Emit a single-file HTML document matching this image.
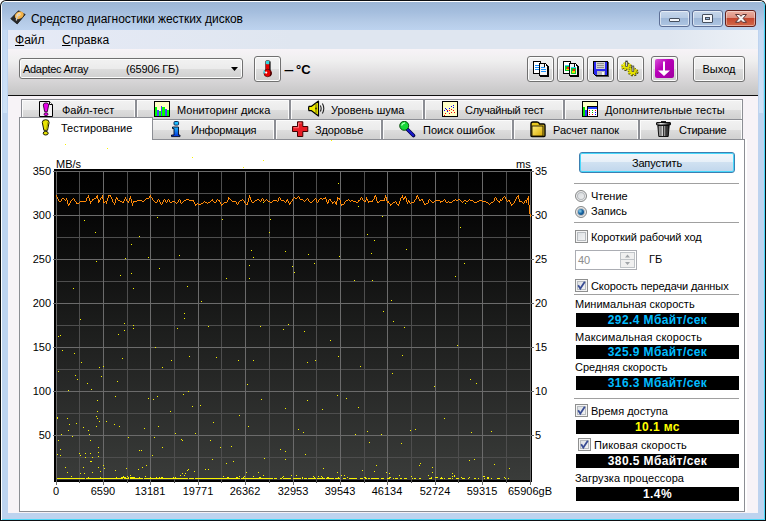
<!DOCTYPE html>
<html lang="ru"><head><meta charset="utf-8"><title>Средство диагностики жестких дисков</title>
<style>
html,body{margin:0;padding:0;background:#fff;overflow:hidden}
body{width:766px;height:521px;position:relative;font-family:"Liberation Sans",sans-serif;font-size:11px;color:#000}
.abs{position:absolute;white-space:nowrap}
.t11{font-size:11px;line-height:13px}
.cl{font-size:11px;line-height:13px;color:#000}
/* window frame */
#frame{left:0;top:0;width:766px;height:521px;background:#0c0e12;border-radius:6px 6px 0 0}
#frame2{left:1px;top:1px;width:764px;height:519px;background:#fff;border-radius:5px 5px 0 0}
#cy{left:2px;top:2px;width:763px;height:518px;background:#4ad7f7;border-radius:4px 4px 0 0}
#glass{left:2px;top:2px;width:762px;height:517px;border-radius:4px 4px 0 0;background:linear-gradient(#9cb6d6 0,#a5bede 10px,#b5cbe7 20px,#bdd3ef 28px,#bdd3ef 100%)}
#client{left:8px;top:30px;width:750px;height:483px;background:#f7f3f7}
#menubar{left:8px;top:30px;width:750px;height:19px;background:linear-gradient(90deg,#e6eaf6 0,#dfe6f0 38%,#dfe6f0 88%,#eef2f7 100%)}
#toolbar{left:8px;top:49px;width:750px;height:46px;background:linear-gradient(#f7f3f7 0,#efefef 25%,#dcdadc 60%,#c5c5c5 100%)}
#tbline{left:8px;top:95px;width:750px;height:1px;background:#101010}
.tab{box-sizing:border-box;border:1px solid #8c8e94;border-bottom:none;background:linear-gradient(#f2f2f2 0,#ebebeb 50%,#dddddd 50%,#cfcfcf 100%);box-shadow:inset 1px 1px 0 #fbfbfb,inset -1px 0 0 #fbfbfb}
.tab span{position:absolute;top:3px;font-size:11px;line-height:13px}
.tabsel{box-sizing:border-box;border:1px solid #8c8e94;border-bottom:none;background:#fff}
#page{left:19px;top:139px;width:726px;height:373px;box-sizing:border-box;border:1px solid #8c8e94;background:#fff}
.btn{box-sizing:border-box;border:1px solid #707070;border-radius:3px;background:linear-gradient(#f2f2f2 0,#ebebeb 50%,#dddddd 50%,#cfcfcf 100%);box-shadow:inset 0 0 0 1px #fcfcfc}
.sep{height:1px;background:#a0a0a0;left:574px;width:165px}
.bb{left:576px;width:163px;height:14px;background:#000;text-align:center;font-weight:bold;font-size:12px;line-height:14px;letter-spacing:0.4px}
.chk{box-sizing:border-box;width:13px;height:13px;border:1px solid #8e8f8f;background:linear-gradient(135deg,#d8dce0,#f8f8f8);box-shadow:inset 0 0 0 1px #f4f4f4, inset 0 0 0 2px #b8bcc0}
.radio{box-sizing:border-box;width:12px;height:12px;border:1px solid #868888;border-radius:50%;background:linear-gradient(135deg,#cfd3d7,#f6f6f6);box-shadow:inset 0 0 0 1px #f2f2f2,inset 0 0 0 2px #b6babe}
</style></head><body>
<div id="frame" class="abs"></div><div id="frame2" class="abs"></div><div id="cy" class="abs"></div><div id="glass" class="abs"></div>
<!-- title -->

<div class="abs" style="left:31px;top:11px;font-size:12px;line-height:16px;letter-spacing:-0.05px">Средство диагностики жестких дисков</div>
<!-- caption buttons -->
<div class="abs" style="left:659px;top:10px;width:31px;height:17px;box-sizing:border-box;border:1px solid #5d6f96;border-radius:3px;background:linear-gradient(#c6d6ea 0,#b7cbe4 45%,#9fb8d8 50%,#aec5e2 100%);box-shadow:inset 0 0 0 1px rgba(255,255,255,.55)"></div>
<div class="abs" style="left:692px;top:10px;width:31px;height:17px;box-sizing:border-box;border:1px solid #5d6f96;border-radius:3px;background:linear-gradient(#c6d6ea 0,#b7cbe4 45%,#9fb8d8 50%,#aec5e2 100%);box-shadow:inset 0 0 0 1px rgba(255,255,255,.55)"></div>
<div class="abs" style="left:725px;top:10px;width:31px;height:17px;box-sizing:border-box;border:1px solid #63201c;border-radius:3px;background:linear-gradient(#ebb0a2 0,#dd9080 45%,#c5472f 50%,#d4694a 100%);box-shadow:inset 0 0 0 1px rgba(255,255,255,.4)"></div>
<svg class="abs" style="left:659px;top:10px" width="97" height="17" viewBox="0 0 97 17"><rect x="10.500" y="8.500" width="10" height="3" rx="0.500" fill="#f4f6fa" stroke="#454f5e"/><rect x="43.500" y="4.500" width="10" height="8" rx="0.500" fill="#f4f6fa" stroke="#454f5e"/><rect x="46.500" y="7.500" width="4" height="2" fill="#98b4da" stroke="#454f5e"/><path d="M76.500 4.500L80.300 4.500L82 6.300L83.700 4.500L87.500 4.500L84.100 8.400L87.500 12.300L83.700 12.300L82 10.500L80.300 12.300L76.500 12.300L79.900 8.400Z" fill="#f6f4f4" stroke="#5a3434" stroke-width="1" stroke-linejoin="round"/></svg>

<div class="abs" style="left:3px;top:30px;width:4px;height:83px;background:linear-gradient(#c4d9f3,#cfe2f7)"></div><div class="abs" style="left:759px;top:30px;width:4px;height:83px;background:linear-gradient(#c4d9f3,#cfe2f7)"></div>
<div id="client" class="abs"></div>
<div id="menubar" class="abs"></div>
<div class="abs" style="left:15px;top:32px;font-size:12px;line-height:16px"><u>Ф</u>айл</div>
<div class="abs" style="left:62px;top:32px;font-size:12px;line-height:16px"><u>С</u>правка</div>
<div id="toolbar" class="abs"></div><div id="tbline" class="abs"></div>

<!-- combo -->
<div class="abs btn" style="left:19px;top:58px;width:224px;height:21px"></div>
<div class="abs t11" style="left:23px;top:63px;letter-spacing:-0.3px">Adaptec Array</div>
<div class="abs t11" style="left:126px;top:63px;letter-spacing:-0.15px">(65906 ГБ)</div>
<svg class="abs" style="left:231px;top:67px" width="8" height="5"><path d="M0 0H7L3.500 4Z" fill="#000"/></svg>
<!-- thermometer -->
<div class="abs btn" style="left:254px;top:56px;width:27px;height:26px"></div>
<svg class="abs" style="left:262px;top:60px" width="12" height="18" viewBox="0 0 12 18"><rect x="3.500" y="0.500" width="4.500" height="12" rx="1.500" fill="#e80000" stroke="#303030" stroke-width="0.600"/><rect x="3.800" y="0.800" width="3.900" height="3.400" rx="1.200" fill="#30d8e0"/><circle cx="5.700" cy="13" r="3.800" fill="#e80000" stroke="#300000" stroke-width="0.600"/><rect x="7.400" y="1.500" width="1.100" height="9" fill="#181818"/><path d="M8.500 11.500Q10 13.500 8 16" stroke="#400000" stroke-width="1.200" fill="none"/><circle cx="4.200" cy="12.600" r="1.100" fill="#fff"/><rect x="1.500" y="10.500" width="1.500" height="3" fill="#40d0e0"/></svg>
<div class="abs" style="left:284px;top:62px;font-size:13px;line-height:16px;font-weight:bold;transform:scaleX(1.35);transform-origin:0 0">–</div><div class="abs" style="left:296px;top:62px;font-size:13px;line-height:16px;font-weight:bold">°C</div>
<!-- toolbar buttons -->
<div class="abs btn" style="left:527px;top:56px;width:27px;height:26px"></div>
<div class="abs btn" style="left:557px;top:56px;width:27px;height:26px"></div>
<div class="abs btn" style="left:587px;top:56px;width:27px;height:26px"></div>
<div class="abs btn" style="left:617px;top:56px;width:27px;height:26px"></div>
<div class="abs btn" style="left:651px;top:56px;width:27px;height:26px"></div>
<div class="abs btn" style="left:693px;top:56px;width:52px;height:26px"></div>
<div class="abs t11" style="left:693px;width:52px;top:63px;text-align:center">Выход</div>
<!-- toolbar icons -->
<svg class="abs" style="left:533px;top:61px" width="17" height="17" viewBox="0 0 17 17" shape-rendering="crispEdges"><rect x="0" y="0" width="8" height="13" fill="#000"/><rect x="1" y="1" width="6" height="11" fill="#fff"/><path d="M2 4.500h4M2 6.500h4M2 8.500h4" stroke="#1890ff"/><path d="M6 2H12L16 6V16H7V15H6Z" fill="#000"/><path d="M7 3H11V6H14V14H7Z" fill="#f4f4f4"/><path d="M12 3v2h2" stroke="#fff" fill="none"/><path d="M8 6.500h4M8 8.500h5M8 10.500h5" stroke="#1890ff"/></svg>
<svg class="abs" style="left:563px;top:61px" width="17" height="17" viewBox="0 0 17 17" shape-rendering="crispEdges"><rect x="0" y="0" width="8" height="13" fill="#000"/><rect x="1" y="1" width="6" height="11" fill="#fff"/><rect x="2" y="4" width="5" height="6" fill="#10c830"/><rect x="2" y="4" width="5" height="1" fill="#30d0ff"/><rect x="4" y="6" width="2" height="2" fill="#ff2010"/><rect x="3" y="8" width="3" height="1" fill="#f0e000"/><path d="M6 2H12L16 6V16H7V15H6Z" fill="#000"/><path d="M7 3H11V6H14V14H7Z" fill="#f4f4f4"/><path d="M12 3v2h2" stroke="#fff" fill="none"/><rect x="8" y="6" width="5" height="7" fill="#10c830"/><rect x="8" y="6" width="5" height="1" fill="#30d0ff"/><rect x="10" y="8" width="2" height="2" fill="#ff2010"/><rect x="9" y="10" width="3" height="2" fill="#f0e000"/></svg>
<svg class="abs" style="left:593px;top:61px" width="16" height="16" viewBox="0 0 16 16" shape-rendering="crispEdges"><path d="M0 0H15V15H2L0 13Z" fill="#000"/><path d="M1 1H14V14H2.500L1 12.500Z" fill="#2828f0"/><rect x="3" y="1" width="9" height="7" fill="#d0d0d0"/><path d="M4 2.500h7M4 4.500h7M4 6.500h7" stroke="#909090"/><rect x="4" y="10" width="8" height="4" fill="#b8b8b8"/><rect x="9" y="11" width="2" height="3" fill="#f8f8f8"/><path d="M15.500 1V15.500H3" stroke="#505050" fill="none"/></svg>
<svg class="abs" style="left:621px;top:60px" width="18" height="17" viewBox="0 0 18 17"><g transform="translate(5.7,6.8) scale(1,0.800)"><circle r="3.400" fill="#3a3a00"/><circle r="4.100" fill="none" stroke="#3a3a00" stroke-width="2.600" stroke-dasharray="1.900 1.320"/></g><g transform="translate(5.2,6.2) scale(1,0.800)"><circle r="3.300" fill="#e8e400"/><circle r="4" fill="none" stroke="#e8e400" stroke-width="2.200" stroke-dasharray="1.700 1.440"/></g><g transform="translate(12.1,12.0) scale(1,0.800)"><circle r="3.400" fill="#3a3a00"/><circle r="4.100" fill="none" stroke="#3a3a00" stroke-width="2.600" stroke-dasharray="1.900 1.320"/></g><g transform="translate(11.6,11.4) scale(1,0.800)"><circle r="3.300" fill="#e8e400"/><circle r="4" fill="none" stroke="#e8e400" stroke-width="2.200" stroke-dasharray="1.700 1.440"/></g><rect x="4.700" y="1" width="1.800" height="5.500" fill="#d8d8d8" stroke="#303030" stroke-width="0.700"/><rect x="11" y="6" width="1.800" height="5.500" fill="#d8d8d8" stroke="#303030" stroke-width="0.700"/></svg>
<svg class="abs" style="left:655px;top:59px" width="19" height="19" viewBox="0 0 19 19"><defs><linearGradient id="mg" x1="0" y1="0" x2="1" y2="1"><stop offset="0" stop-color="#d850d8"/><stop offset="0.400" stop-color="#b800b8"/><stop offset="1" stop-color="#a000a0"/></linearGradient></defs><rect x="0" y="0" width="19" height="19" rx="2" fill="url(#mg)"/><path d="M8 2.500H10V11.500H15L9 17L3 11.500H8Z" fill="#fff"/></svg>
<!-- app icon -->
<svg class="abs" style="left:10px;top:10px" width="17" height="15" viewBox="0 0 17 15"><path d="M8.500 0.800L15.200 4.500L7.200 14L0.800 8.700Z" fill="#282828" stroke="#181818" stroke-width="0.800" stroke-linejoin="round"/><ellipse cx="9.300" cy="5.300" rx="4.700" ry="3.500" fill="#f2b24a" transform="rotate(-30 9.300 5.300)"/><ellipse cx="8.600" cy="4.600" rx="2.400" ry="1.700" fill="#ffdc98" transform="rotate(-30 8.600 4.600)"/><circle cx="9" cy="4.800" r="1" fill="#c8c8d0"/><path d="M7.300 5.500L6.300 10.500" stroke="#d0d0d0" stroke-width="1.300"/></svg>


<!-- tabs back row -->
<div class="abs tab" style="left:21px;top:99px;width:115px;height:21px"></div>
<div class="abs tab" style="left:136px;top:99px;width:154px;height:21px"></div>
<div class="abs tab" style="left:290px;top:99px;width:134px;height:21px"></div>
<div class="abs tab" style="left:424px;top:99px;width:140px;height:21px"></div>
<div class="abs tab" style="left:564px;top:99px;width:179px;height:21px"></div>
<div class="abs t11" style="left:62px;top:104px">Файл-тест</div>
<div class="abs t11" style="left:177px;top:104px">Мониторинг диска</div>
<div class="abs t11" style="left:331px;top:104px">Уровень шума</div>
<div class="abs t11" style="left:465px;top:104px;letter-spacing:-0.28px">Случайный тест</div>
<div class="abs t11" style="left:605px;top:104px">Дополнительные тесты</div>
<!-- tabs front row -->
<div class="abs tab" style="left:150px;top:119px;width:125px;height:21px"></div>
<div class="abs tab" style="left:275px;top:119px;width:107px;height:21px"></div>
<div class="abs tab" style="left:382px;top:119px;width:131px;height:21px"></div>
<div class="abs tab" style="left:513px;top:119px;width:126px;height:21px"></div>
<div class="abs tab" style="left:639px;top:119px;width:104px;height:21px"></div>
<div class="abs t11" style="left:191px;top:124px;letter-spacing:-0.2px">Информация</div>
<div class="abs t11" style="left:315px;top:124px;letter-spacing:-0.12px">Здоровье</div>
<div class="abs t11" style="left:423px;top:124px">Поиск ошибок</div>
<div class="abs t11" style="left:553px;top:124px;letter-spacing:-0.08px">Расчет папок</div>
<div class="abs t11" style="left:679px;top:124px;letter-spacing:-0.28px">Стирание</div>
<div class="abs" style="left:745px;top:139px;width:2px;height:373px;background:#fff"></div><div id="page" class="abs"></div>
<div class="abs tabsel" style="left:19px;top:117px;width:134px;height:23px"></div>
<div class="abs t11" style="left:61px;top:122px">Тестирование</div>
<!-- tab icons -->
<svg class="abs" style="left:39px;top:101px" width="15" height="16" viewBox="0 0 15 16"><path d="M0.500 0.500H10.500L13.500 3.500V15.500H0.500Z" fill="#f4f2f4" stroke="#000"/><path d="M10.500 0.500V3.500H13.500" fill="#fff" stroke="#000"/><path d="M4.300 4Q4.300 1.900 7 1.900Q9.700 1.900 9.700 4L8.300 10.800H5.700Z" fill="#e800e8" stroke="#300030" stroke-width="0.900"/><ellipse cx="7" cy="13.200" rx="2" ry="1.400" fill="#e800e8" stroke="#300030" stroke-width="0.800"/></svg>
<svg class="abs" style="left:41px;top:119px" width="10" height="17" viewBox="0 0 10 17"><path d="M1.300 3.500Q1.300 0.700 4.700 0.700Q8.100 0.700 8.100 3.500L6.500 11.300H2.900Z" fill="#e8e400" stroke="#181800" stroke-width="1"/><path d="M6.900 3L5.700 10.500" stroke="#a09c00" stroke-width="1.100" fill="none"/><ellipse cx="4.700" cy="14.200" rx="2.500" ry="1.800" fill="#e8e400" stroke="#181800" stroke-width="1"/></svg>
<svg class="abs" style="left:154px;top:101px" width="16" height="16" viewBox="0 0 16 16" shape-rendering="crispEdges"><rect x="0" y="0" width="16" height="16" fill="#000"/><rect x="1" y="1" width="14" height="14" fill="#ffffc6"/><rect x="1" y="6" width="2" height="9" fill="#00ff00"/><rect x="3" y="9" width="2" height="6" fill="#4a41ff"/><rect x="5" y="10" width="2" height="5" fill="#00ff00"/><rect x="7" y="5" width="1" height="10" fill="#4a41ff"/><rect x="8" y="6" width="3" height="9" fill="#00ff00"/><rect x="11" y="8" width="2" height="7" fill="#4a41ff"/><rect x="13" y="9" width="2" height="6" fill="#00ff00"/></svg>
<svg class="abs" style="left:170px;top:120px" width="12" height="18" viewBox="0 0 12 18"><defs><linearGradient id="ig" x1="0" y1="0" x2="0" y2="1"><stop offset="0" stop-color="#20b8ff"/><stop offset="1" stop-color="#0030d8"/></linearGradient></defs><rect x="4" y="1.500" width="4.600" height="3.600" rx="1" fill="#20c0ff" stroke="#001848" stroke-width="0.900"/><path d="M2.500 7H8.500V15H10V16.600H1.500V15H4V8.600H2.500Z" fill="url(#ig)" stroke="#000820" stroke-width="0.900"/></svg>
<svg class="abs" style="left:308px;top:100px" width="17" height="17" viewBox="0 0 17 17"><path d="M1 6.300Q0.200 8.500 1 10.700H3.500L10.500 16V1L3.500 6.300Z" fill="#f0ec00" stroke="#000" stroke-width="1.200" stroke-linejoin="round"/><path d="M8 3.500V13.500" stroke="#6b6900" stroke-width="1" fill="none"/><circle cx="8" cy="8.500" r="0.900" fill="#303000"/><path d="M12.300 5.500Q14 8.500 12.300 11.500M14.400 3.500Q17.200 8.500 14.400 13.500" stroke="#202020" stroke-width="1.100" fill="none"/></svg>
<svg class="abs" style="left:292px;top:121px" width="17" height="17" viewBox="0 0 17 17"><path d="M5.500 0.800H10.800V5.500H15.800V10.500H10.800V15.500H5.500V10.500H0.500V5.500H5.500Z" fill="#e81c24" stroke="#400000" stroke-width="1" stroke-linejoin="round"/><path d="M6.500 2H9.500M1.700 6.700H6.500V2" stroke="#ff7078" stroke-width="1" fill="none"/></svg>
<svg class="abs" style="left:442px;top:101px" width="16" height="16" viewBox="0 0 16 16" shape-rendering="crispEdges"><rect x="0" y="0" width="16" height="16" fill="#000"/><rect x="1" y="1" width="14" height="14" fill="#ffffc6"/><path d="M2 14h1M3 12h1M5 9h1M7 12h1M7 9h1M9 11h1M11 9h1M12 11h1M9 8h1" stroke="#ff0000" stroke-width="1"/><path d="M2 9h1M3 7h1M5 10h1M7 7h1M9 5h1M11 4h1M11 6h1M4 8h1" stroke="#0000ff" stroke-width="1"/></svg>
<svg class="abs" style="left:399px;top:121px" width="17" height="17" viewBox="0 0 17 17"><path d="M8 8L14.500 14.500" stroke="#000040" stroke-width="3.600" stroke-linecap="round"/><path d="M8 8L14.300 14.300" stroke="#1818d0" stroke-width="2" stroke-linecap="round"/><circle cx="5.200" cy="4.800" r="4.500" fill="#18d838" stroke="#004000" stroke-width="0.900"/><path d="M2.500 4.500Q3.500 2 6 1.800" stroke="#b0ffb8" stroke-width="1.200" fill="none"/></svg>
<svg class="abs" style="left:582px;top:101px" width="16" height="16" viewBox="0 0 16 16" shape-rendering="crispEdges"><rect x="0" y="0" width="16" height="16" fill="#000"/><rect x="1" y="1" width="14" height="14" fill="#ffffc6"/><rect x="1" y="6" width="2" height="9" fill="#00e000"/><rect x="3" y="9" width="2" height="6" fill="#3030ff"/><rect x="5" y="5" width="11" height="11" fill="#000"/><rect x="6" y="6" width="9" height="9" fill="#fff"/><rect x="6" y="6" width="9" height="2" fill="#2040ff"/><path d="M7 9h1M7 11h1M7 13h1M10 13h1M13 9h1" stroke="#ff0000"/><path d="M10 9h1M10 11h1" stroke="#00c000"/><path d="M13 11h1M13 13h1" stroke="#0000ff"/></svg>
<svg class="abs" style="left:530px;top:121px" width="16" height="17" viewBox="0 0 16 17"><defs><linearGradient id="fg" x1="0" y1="0" x2="1" y2="1"><stop offset="0" stop-color="#fff080"/><stop offset="1" stop-color="#d8a800"/></linearGradient></defs><path d="M1 3Q1 1 3 1H7Q9 1 9.500 3H13.500Q15 3 15 4.500V14.500Q15 15.500 14 15.500H2Q1 15.500 1 14.500Z" fill="#e8c820" stroke="#000" stroke-width="1.400"/><rect x="2" y="5" width="11" height="10" fill="url(#fg)" stroke="#201800" stroke-width="0.900"/></svg>
<svg class="abs" style="left:656px;top:120px" width="15" height="18" viewBox="0 0 15 18"><defs><linearGradient id="tg" x1="0" y1="0" x2="1" y2="0"><stop offset="0" stop-color="#404040"/><stop offset="0.300" stop-color="#f4f4f4"/><stop offset="0.520" stop-color="#b0b0b0"/><stop offset="0.780" stop-color="#484848"/><stop offset="1" stop-color="#101010"/></linearGradient></defs><rect x="5" y="1" width="5" height="2" fill="#202020"/><rect x="0.500" y="2.500" width="14" height="2.500" rx="0.500" fill="url(#tg)" stroke="#000" stroke-width="0.900"/><path d="M1.800 5.500H13.200L12.200 16.500H2.800Z" fill="url(#tg)" stroke="#000" stroke-width="0.900"/><path d="M5 6V16M7.500 6V16M10 6V16" stroke="#181818" stroke-width="0.800"/></svg>


<svg class="abs" style="left:0;top:0" width="766" height="521" viewBox="0 0 766 521" shape-rendering="crispEdges">
<defs><linearGradient id="cg" x1="0" y1="0" x2="0" y2="1"><stop offset="0" stop-color="#000"/><stop offset="0.12" stop-color="#050505"/><stop offset="1" stop-color="#3a3c3a"/></linearGradient></defs>
<rect x="54" y="169" width="478" height="313" fill="#000"/>
<rect x="56" y="171" width="475" height="309" fill="url(#cg)"/>
<path d="M79.5 171V483 M127.5 171V483 M174.5 171V483 M221.5 171V483 M269.5 171V483 M316.5 171V483 M364.5 171V483 M411.5 171V483 M458.5 171V483 M506.5 171V483 M56 193.5H531 M56 237.5H531 M56 281.5H531 M56 325.5H531 M56 369.5H531 M56 413.5H531 M56 457.5H531" stroke="#4e4e4e" stroke-width="1" fill="none"/>
<path d="M56.5 171V485 M103.5 171V485 M150.5 171V485 M198.5 171V485 M245.5 171V485 M293.5 171V485 M340.5 171V485 M387.5 171V485 M435.5 171V485 M482.5 171V485 M530.5 171V485 M53 171.5H534 M53 215.5H534 M53 259.5H534 M53 303.5H534 M53 347.5H534 M53 391.5H534 M53 435.5H534" stroke="#6b6b6b" stroke-width="1" fill="none"/>
<path d="M57 478.5h12 M69 478.5h16 M86 478.5h5 M91 478.5h20 M111 478.5h12 M124 478.5h5 M130 478.5h8 M138 478.5h5 M144 478.5h16 M160 478.5h8 M168 478.5h20 M189 478.5h5 M195 478.5h5 M200 478.5h20 M220 478.5h20 M241 478.5h16 M257 478.5h8 M265 478.5h8 M274 478.5h3 M280 478.5h2 M283 478.5h8 M293 478.5h8 M302 478.5h1 M304 478.5h3 M308 478.5h8 M317 478.5h8 M326 478.5h8 M335 478.5h5 M343 478.5h3 M349 478.5h8 M360 478.5h3 M365 478.5h2 M368 478.5h2 M371 478.5h8 M381 478.5h3 M387 478.5h3 M393 478.5h1 M395 478.5h3 M400 478.5h2 M404 478.5h3 M412 478.5h1 M414 478.5h2 M419 478.5h2 M429 478.5h3 M440 478.5h3 M444 478.5h1 M448 478.5h3 M452 478.5h1 M456 478.5h3 M462 478.5h3 M468 478.5h1 M474 478.5h2 M478 478.5h1 M484 478.5h1 M487 478.5h2 M491 478.5h1 M497 478.5h3 M505 478.5h1 M508 478.5h1 M338 477.5h1 M338 477.5h1 M134 477.5h1 M175 477.5h1 M150 477.5h1 M131 477.5h1 M121 477.5h2 M435 477.5h2 M260 477.5h1 M88 477.5h1 M282 477.5h1 M364 477.5h1 M347 477.5h1 M243 477.5h1 M504 477.5h1 M133 477.5h1 M365 477.5h1 M116 477.5h1 M302 477.5h1 M130 477.5h1 M436 477.5h2 M139 477.5h1 M327 477.5h2 M322 477.5h1 M314 477.5h1 M469 477.5h1 M159 477.5h1 M431 477.5h1 M461 477.5h1 M156 477.5h1 M243 477.5h1 M173 477.5h1 M161 477.5h2 M487 477.5h2 M100 477.5h1 M441 477.5h1 M227 477.5h2 M259 477.5h2 M100 477.5h1 M122 477.5h2 M131 477.5h2 M236 477.5h2 M124 477.5h2 M389 477.5h2 M128 477.5h1 M71 476.5h1 M313 476.5h1 M223 476.5h1 M484 476.5h1 M321 476.5h1 M123 476.5h1 M318 476.5h1 M454 475.5h1 M145 476.5h1 M428 475.5h1 M223 476.5h1 M341 475.5h1 M184 475.5h1 M452 476.5h1 M344 475.5h1 M283 476.5h1 M411 476.5h1 M127 476.5h1 M283 476.5h1 M180 475.5h1 M399 475.5h1 M454 476.5h1 M130 475.5h1 M296 475.5h1 M483 476.5h1 M263 475.5h1 M239 476.5h1 M244 476.5h1 M291 475.5h1 M253 476.5h1 M208 469.5h1 M460 227.5h1 M100 471.5h1 M455 276.5h1 M189 356.5h1 M415 429.5h1 M381 434.5h1 M91 461.5h1 M62 350.5h1 M194 471.5h1 M420 463.5h1 M139 450.5h1 M216 357.5h1 M162 367.5h1 M148 257.5h1 M185 473.5h1 M154 437.5h1 M285 251.5h1 M84 473.5h1 M187 470.5h1 M201 301.5h1 M80 455.5h1 M285 408.5h1 M337 472.5h1 M239 415.5h1 M99 367.5h1 M159 268.5h1 M103 465.5h1 M261 399.5h1 M210 440.5h1 M133 328.5h1 M131 244.5h1 M315 360.5h1 M386 472.5h1 M288 324.5h1 M182 473.5h1 M465 203.5h1 M104 468.5h1 M471 432.5h1 M80 319.5h1 M96 416.5h1 M212 459.5h1 M303 432.5h1 M401 443.5h1 M307 362.5h1 M294 272.5h1 M338 183.5h1 M65 467.5h1 M354 280.5h1 M124 323.5h1 M305 454.5h1 M264 458.5h1 M233 461.5h1 M226 278.5h1 M157 217.5h1 M205 469.5h1 M358 206.5h1 M494 464.5h1 M280 449.5h1 M298 429.5h1 M392 373.5h1 M142 467.5h1 M128 437.5h1 M146 465.5h1 M179 255.5h1 M253 360.5h1 M249 278.5h1 M314 263.5h1 M491 431.5h1 M184 318.5h1 M68 390.5h1 M307 400.5h1 M171 360.5h1 M406 249.5h1 M100 471.5h1 M457 345.5h1 M76 423.5h1 M122 358.5h1 M114 424.5h1 M355 434.5h1 M181 439.5h1 M183 394.5h1 M389 473.5h1 M188 391.5h1 M246 472.5h1 M158 426.5h1 M162 447.5h1 M175 433.5h1 M208 326.5h1 M369 442.5h1 M85 457.5h1 M258 472.5h1 M362 470.5h1 M87 383.5h1 M432 467.5h1 M141 450.5h1 M73 288.5h1 M226 463.5h1 M97 411.5h1 M120 275.5h1 M251 250.5h1 M101 376.5h1 M247 384.5h1 M222 219.5h1 M72 436.5h1 M77 379.5h1 M188 469.5h1 M367 431.5h1 M372 280.5h1 M410 430.5h1 M58 336.5h1 M90 440.5h1 M367 234.5h1 M292 266.5h1 M97 400.5h1 M138 469.5h1 M74 353.5h1 M509 468.5h1 M376 465.5h1 M285 459.5h1 M402 355.5h1 M119 426.5h1 M200 405.5h1 M434 386.5h1 M152 455.5h1 M153 399.5h1 M182 440.5h1 M470 379.5h1 M75 375.5h1 M476 383.5h1 M248 426.5h1 M118 334.5h1 M95 232.5h1 M60 335.5h1 M374 471.5h1 M231 446.5h1 M187 286.5h1 M404 327.5h1 M96 261.5h1 M337 395.5h1 M338 356.5h1 M391 300.5h1 M269 232.5h1 M157 396.5h1 M60 455.5h1 M115 396.5h1 M452 473.5h1 M339 256.5h1 M260 326.5h1 M144 428.5h1 M323 468.5h1 M253 257.5h1 M469 460.5h1 M304 331.5h1 M382 216.5h1 M139 236.5h1 M374 240.5h1 M346 398.5h1 M322 409.5h1 M133 288.5h1 M155 347.5h1 M117 381.5h1 M213 422.5h1 M184 313.5h1 M285 451.5h1 M58 371.5h1 M177 328.5h1 M148 398.5h1 M91 389.5h1 M103 366.5h1 M393 321.5h1 M99 421.5h1 M84 220.5h1 M126 468.5h1 M474 459.5h1 M308 254.5h1 M464 263.5h1 M170 411.5h1 M444 418.5h1 M371 253.5h1 M360 366.5h1 M220 447.5h1 M263 202.5h1 M249 265.5h1 M115 470.5h1 M192 406.5h1 M131 273.5h1 M283 329.5h1 M81 362.5h1 M432 472.5h1 M133 325.5h1 M270 219.5h1 M124 330.5h1 M80 473.5h1 M238 360.5h1 M330 340.5h1 M358 407.5h1 M125 258.5h1 M419 465.5h1 M383 311.5h1 M195 433.5h1 M57 418.5h1 M98 467.5h1 M92 472.5h1 M79 453.5h1 M98 452.5h1 M85 453.5h1 M90 461.5h1 M88 430.5h1 M67 472.5h1 M57 417.5h1 M60 449.5h1 M58 440.5h1 M68 430.5h1 M67 418.5h1 M106 421.5h1 M57 454.5h1 M92 457.5h1 M69 424.5h1 M83 427.5h1 M90 453.5h1 M98 447.5h1 M98 456.5h1 M83 467.5h1 M96 426.5h1 M89 434.5h1 M61 434.5h1 M97 418.5h1 M103 465.5h1 M65 144.5h1 M107 148.5h1 M192 157.5h1 M243 167.5h1 M331 140.5h1 M263 160.5h1" stroke="#f7f300" stroke-width="1" fill="none"/>
<path d="M56 195.5h1 M56 196.5h1 M57 197.5h1 M57 198.5h1 M58 199.5h1 M58 200.5h1 M59 201.5h1 M60 201.5h1 M61 199.5h1 M61 200.5h1 M62 198.5h1 M63 198.5h1 M64 199.5h1 M65 200.5h1 M66 198.5h1 M66 199.5h1 M67 200.5h1 M67 201.5h1 M67 202.5h1 M67 203.5h1 M68 204.5h1 M68 205.5h1 M69 203.5h1 M69 204.5h1 M70 201.5h1 M70 202.5h1 M71 200.5h1 M72 199.5h1 M73 198.5h1 M74 199.5h1 M74 200.5h1 M75 201.5h1 M76 202.5h1 M76 203.5h1 M77 203.5h1 M78 203.5h1 M79 202.5h1 M80 201.5h1 M81 201.5h1 M82 201.5h1 M83 201.5h1 M84 201.5h1 M85 201.5h1 M86 198.5h1 M86 199.5h1 M86 200.5h1 M87 197.5h1 M88 195.5h1 M88 196.5h1 M88 197.5h1 M89 198.5h1 M89 199.5h1 M89 200.5h1 M90 201.5h1 M90 202.5h1 M90 203.5h1 M91 201.5h1 M92 199.5h1 M92 200.5h1 M93 199.5h1 M94 198.5h1 M95 198.5h1 M96 196.5h1 M96 197.5h1 M97 195.5h1 M97 196.5h1 M97 197.5h1 M97 198.5h1 M98 199.5h1 M98 200.5h1 M98 201.5h1 M98 202.5h1 M99 200.5h1 M99 201.5h1 M100 198.5h1 M100 199.5h1 M101 197.5h1 M102 195.5h1 M102 196.5h1 M102 197.5h1 M102 198.5h1 M103 199.5h1 M103 200.5h1 M103 201.5h1 M103 202.5h1 M104 202.5h1 M105 201.5h1 M106 201.5h1 M106 202.5h1 M106 203.5h1 M107 198.5h1 M107 199.5h1 M107 200.5h1 M108 195.5h1 M108 196.5h1 M108 197.5h1 M109 195.5h1 M110 195.5h1 M110 196.5h1 M111 197.5h1 M111 198.5h1 M112 199.5h1 M112 200.5h1 M112 201.5h1 M113 202.5h1 M114 203.5h1 M114 204.5h1 M115 199.5h1 M115 200.5h1 M115 201.5h1 M115 202.5h1 M116 197.5h1 M116 198.5h1 M117 198.5h1 M117 199.5h1 M118 200.5h1 M119 200.5h1 M120 201.5h1 M121 201.5h1 M122 202.5h1 M123 201.5h1 M123 202.5h1 M124 199.5h1 M124 200.5h1 M125 197.5h1 M125 198.5h1 M126 199.5h1 M126 200.5h1 M127 201.5h1 M128 201.5h1 M128 202.5h1 M129 198.5h1 M129 199.5h1 M129 200.5h1 M130 196.5h1 M130 197.5h1 M130 198.5h1 M131 199.5h1 M131 200.5h1 M131 201.5h1 M131 202.5h1 M132 203.5h1 M132 204.5h1 M132 205.5h1 M133 201.5h1 M133 202.5h1 M134 201.5h1 M135 201.5h1 M136 201.5h1 M137 200.5h1 M138 200.5h1 M139 200.5h1 M140 200.5h1 M141 200.5h1 M142 201.5h1 M143 201.5h1 M144 200.5h1 M145 199.5h1 M146 198.5h1 M147 198.5h1 M148 198.5h1 M149 196.5h1 M149 197.5h1 M150 195.5h1 M150 196.5h1 M151 197.5h1 M152 198.5h1 M152 199.5h1 M153 200.5h1 M154 201.5h1 M155 202.5h1 M156 202.5h1 M157 200.5h1 M157 201.5h1 M158 199.5h1 M159 200.5h1 M159 201.5h1 M160 202.5h1 M160 203.5h1 M161 204.5h1 M162 202.5h1 M162 203.5h1 M163 200.5h1 M163 201.5h1 M164 199.5h1 M165 200.5h1 M165 201.5h1 M166 202.5h1 M167 200.5h1 M167 201.5h1 M168 199.5h1 M169 200.5h1 M169 201.5h1 M170 202.5h1 M171 202.5h1 M172 201.5h1 M173 201.5h1 M174 201.5h1 M175 202.5h1 M176 203.5h1 M177 202.5h1 M178 200.5h1 M178 201.5h1 M179 199.5h1 M180 200.5h1 M180 201.5h1 M180 202.5h1 M181 203.5h1 M182 202.5h1 M183 201.5h1 M184 200.5h1 M185 200.5h1 M186 199.5h1 M187 199.5h1 M188 199.5h1 M189 200.5h1 M190 200.5h1 M191 200.5h1 M192 200.5h1 M193 200.5h1 M193 201.5h1 M194 202.5h1 M194 203.5h1 M195 204.5h1 M195 205.5h1 M196 204.5h1 M197 203.5h1 M198 204.5h1 M199 204.5h1 M200 204.5h1 M201 203.5h1 M202 203.5h1 M203 202.5h1 M204 201.5h1 M205 202.5h1 M206 202.5h1 M207 203.5h1 M208 202.5h1 M209 202.5h1 M210 201.5h1 M211 200.5h1 M212 199.5h1 M212 200.5h1 M213 201.5h1 M214 202.5h1 M215 202.5h1 M216 200.5h1 M216 201.5h1 M217 199.5h1 M218 200.5h1 M219 200.5h1 M219 201.5h1 M220 202.5h1 M220 203.5h1 M221 204.5h1 M221 205.5h1 M222 204.5h1 M223 203.5h1 M224 202.5h1 M225 202.5h1 M226 202.5h1 M227 200.5h1 M227 201.5h1 M228 197.5h1 M228 198.5h1 M228 199.5h1 M229 198.5h1 M230 199.5h1 M231 200.5h1 M232 201.5h1 M233 201.5h1 M234 201.5h1 M235 201.5h1 M236 202.5h1 M236 203.5h1 M237 204.5h1 M238 202.5h1 M238 203.5h1 M239 201.5h1 M240 200.5h1 M241 200.5h1 M242 199.5h1 M243 200.5h1 M244 201.5h1 M244 202.5h1 M245 203.5h1 M246 204.5h1 M247 202.5h1 M247 203.5h1 M247 204.5h1 M248 198.5h1 M248 199.5h1 M248 200.5h1 M248 201.5h1 M249 195.5h1 M249 196.5h1 M249 197.5h1 M250 197.5h1 M250 198.5h1 M250 199.5h1 M251 200.5h1 M251 201.5h1 M252 202.5h1 M253 202.5h1 M254 201.5h1 M255 200.5h1 M256 200.5h1 M257 199.5h1 M258 199.5h1 M259 200.5h1 M260 201.5h1 M261 199.5h1 M261 200.5h1 M262 198.5h1 M263 199.5h1 M263 200.5h1 M264 201.5h1 M265 200.5h1 M266 199.5h1 M267 200.5h1 M268 201.5h1 M269 201.5h1 M270 202.5h1 M271 202.5h1 M272 201.5h1 M273 200.5h1 M274 200.5h1 M275 200.5h1 M276 200.5h1 M277 201.5h1 M278 198.5h1 M278 199.5h1 M278 200.5h1 M279 197.5h1 M280 198.5h1 M280 199.5h1 M281 200.5h1 M282 200.5h1 M283 200.5h1 M284 201.5h1 M285 202.5h1 M286 200.5h1 M286 201.5h1 M287 199.5h1 M287 200.5h1 M288 201.5h1 M288 202.5h1 M289 203.5h1 M289 204.5h1 M290 202.5h1 M290 203.5h1 M291 201.5h1 M292 199.5h1 M292 200.5h1 M293 198.5h1 M294 197.5h1 M295 198.5h1 M296 198.5h1 M297 197.5h1 M298 196.5h1 M299 197.5h1 M299 198.5h1 M300 199.5h1 M301 199.5h1 M302 199.5h1 M303 200.5h1 M304 201.5h1 M305 200.5h1 M306 199.5h1 M307 198.5h1 M308 199.5h1 M308 200.5h1 M309 201.5h1 M310 202.5h1 M311 202.5h1 M312 201.5h1 M313 200.5h1 M314 199.5h1 M315 198.5h1 M316 199.5h1 M316 200.5h1 M316 201.5h1 M317 202.5h1 M318 200.5h1 M318 201.5h1 M319 199.5h1 M320 198.5h1 M321 198.5h1 M322 199.5h1 M323 198.5h1 M324 198.5h1 M325 197.5h1 M325 198.5h1 M326 199.5h1 M326 200.5h1 M326 201.5h1 M327 202.5h1 M327 203.5h1 M328 200.5h1 M328 201.5h1 M328 202.5h1 M329 199.5h1 M330 199.5h1 M330 200.5h1 M331 201.5h1 M332 202.5h1 M332 203.5h1 M333 202.5h1 M334 201.5h1 M335 202.5h1 M335 203.5h1 M336 201.5h1 M336 202.5h1 M336 203.5h1 M336 204.5h1 M337 197.5h1 M337 198.5h1 M337 199.5h1 M337 200.5h1 M338 198.5h1 M339 198.5h1 M339 199.5h1 M340 200.5h1 M340 201.5h1 M340 202.5h1 M340 203.5h1 M341 204.5h1 M341 205.5h1 M342 204.5h1 M343 204.5h1 M344 202.5h1 M344 203.5h1 M345 201.5h1 M346 200.5h1 M347 200.5h1 M348 199.5h1 M349 200.5h1 M350 201.5h1 M351 200.5h1 M352 200.5h1 M353 201.5h1 M354 201.5h1 M355 201.5h1 M356 202.5h1 M357 202.5h1 M358 200.5h1 M358 201.5h1 M359 200.5h1 M360 198.5h1 M360 199.5h1 M361 197.5h1 M362 198.5h1 M362 199.5h1 M363 200.5h1 M364 201.5h1 M365 200.5h1 M365 201.5h1 M366 197.5h1 M366 198.5h1 M366 199.5h1 M367 199.5h1 M367 200.5h1 M368 201.5h1 M368 202.5h1 M369 201.5h1 M370 201.5h1 M371 201.5h1 M372 200.5h1 M372 201.5h1 M373 199.5h1 M374 196.5h1 M374 197.5h1 M374 198.5h1 M375 195.5h1 M375 196.5h1 M376 197.5h1 M376 198.5h1 M376 199.5h1 M376 200.5h1 M377 201.5h1 M377 202.5h1 M378 202.5h1 M379 201.5h1 M380 200.5h1 M381 200.5h1 M382 200.5h1 M383 200.5h1 M384 198.5h1 M384 199.5h1 M384 200.5h1 M385 195.5h1 M385 196.5h1 M385 197.5h1 M386 197.5h1 M386 198.5h1 M386 199.5h1 M386 200.5h1 M387 201.5h1 M387 202.5h1 M388 201.5h1 M388 202.5h1 M389 203.5h1 M390 204.5h1 M390 205.5h1 M391 204.5h1 M392 203.5h1 M393 202.5h1 M394 202.5h1 M395 201.5h1 M396 202.5h1 M396 203.5h1 M397 204.5h1 M398 204.5h1 M398 205.5h1 M399 201.5h1 M399 202.5h1 M399 203.5h1 M400 198.5h1 M400 199.5h1 M400 200.5h1 M401 197.5h1 M402 195.5h1 M402 196.5h1 M402 197.5h1 M403 198.5h1 M403 199.5h1 M404 197.5h1 M404 198.5h1 M405 196.5h1 M405 197.5h1 M406 198.5h1 M406 199.5h1 M406 200.5h1 M406 201.5h1 M407 202.5h1 M407 203.5h1 M408 200.5h1 M408 201.5h1 M409 201.5h1 M409 202.5h1 M410 203.5h1 M411 202.5h1 M412 202.5h1 M413 202.5h1 M414 200.5h1 M414 201.5h1 M415 199.5h1 M416 196.5h1 M416 197.5h1 M416 198.5h1 M417 195.5h1 M417 196.5h1 M418 197.5h1 M418 198.5h1 M419 199.5h1 M419 200.5h1 M420 200.5h1 M421 199.5h1 M422 199.5h1 M422 200.5h1 M423 201.5h1 M423 202.5h1 M424 203.5h1 M424 204.5h1 M425 204.5h1 M426 203.5h1 M427 203.5h1 M428 200.5h1 M428 201.5h1 M428 202.5h1 M429 199.5h1 M430 200.5h1 M431 201.5h1 M432 202.5h1 M433 202.5h1 M434 201.5h1 M435 200.5h1 M436 200.5h1 M437 200.5h1 M438 200.5h1 M439 200.5h1 M440 201.5h1 M440 202.5h1 M441 201.5h1 M442 201.5h1 M443 200.5h1 M444 199.5h1 M445 200.5h1 M445 201.5h1 M446 202.5h1 M447 202.5h1 M448 201.5h1 M449 202.5h1 M450 202.5h1 M451 202.5h1 M452 201.5h1 M453 200.5h1 M454 200.5h1 M455 199.5h1 M456 200.5h1 M457 200.5h1 M458 199.5h1 M459 199.5h1 M460 200.5h1 M461 201.5h1 M462 202.5h1 M463 201.5h1 M464 200.5h1 M465 200.5h1 M466 201.5h1 M467 201.5h1 M468 200.5h1 M469 199.5h1 M470 200.5h1 M471 200.5h1 M472 200.5h1 M473 201.5h1 M474 202.5h1 M475 202.5h1 M476 202.5h1 M477 201.5h1 M478 201.5h1 M479 200.5h1 M480 200.5h1 M481 200.5h1 M482 201.5h1 M483 201.5h1 M484 201.5h1 M485 201.5h1 M486 202.5h1 M487 202.5h1 M488 203.5h1 M489 204.5h1 M490 203.5h1 M491 202.5h1 M492 202.5h1 M493 201.5h1 M494 198.5h1 M494 199.5h1 M494 200.5h1 M495 197.5h1 M496 198.5h1 M496 199.5h1 M497 200.5h1 M498 201.5h1 M499 201.5h1 M499 202.5h1 M500 199.5h1 M500 200.5h1 M501 200.5h1 M502 198.5h1 M502 199.5h1 M503 197.5h1 M504 196.5h1 M505 197.5h1 M505 198.5h1 M506 199.5h1 M506 200.5h1 M507 201.5h1 M508 200.5h1 M509 200.5h1 M509 201.5h1 M510 202.5h1 M510 203.5h1 M511 204.5h1 M511 205.5h1 M512 204.5h1 M513 203.5h1 M514 201.5h1 M514 202.5h1 M515 199.5h1 M515 200.5h1 M516 197.5h1 M516 198.5h1 M517 196.5h1 M518 195.5h1 M518 196.5h1 M518 197.5h1 M518 198.5h1 M519 199.5h1 M519 200.5h1 M519 201.5h1 M520 201.5h1 M521 201.5h1 M522 202.5h1 M523 203.5h1 M524 201.5h1 M524 202.5h1 M525 200.5h1 M526 200.5h1 M526 201.5h1 M526 202.5h1 M527 198.5h1 M527 199.5h1 M528 196.5h1 M528 197.5h1 M528 198.5h1 M528 199.5h1 M528 200.5h1 M528 201.5h1 M528 202.5h1 M528 203.5h1 M528 204.5h1 M529 205.5h1 M529 206.5h1 M529 207.5h1 M529 208.5h1 M529 209.5h1 M529 210.5h1 M529 211.5h1 M529 212.5h1 M529 213.5h1 M530 214.5h1 M530 215.5h1 M530 216.5h1" stroke="#ff8a08" stroke-width="1" fill="none"/>
</svg>
<div class="abs cl" style="left:20px;width:31px;top:165px;text-align:right">350</div>
<div class="abs cl" style="left:535px;top:165px">35</div>
<div class="abs cl" style="left:20px;width:31px;top:209px;text-align:right">300</div>
<div class="abs cl" style="left:535px;top:209px">30</div>
<div class="abs cl" style="left:20px;width:31px;top:253px;text-align:right">250</div>
<div class="abs cl" style="left:535px;top:253px">25</div>
<div class="abs cl" style="left:20px;width:31px;top:297px;text-align:right">200</div>
<div class="abs cl" style="left:535px;top:297px">20</div>
<div class="abs cl" style="left:20px;width:31px;top:341px;text-align:right">150</div>
<div class="abs cl" style="left:535px;top:341px">15</div>
<div class="abs cl" style="left:20px;width:31px;top:385px;text-align:right">100</div>
<div class="abs cl" style="left:535px;top:385px">10</div>
<div class="abs cl" style="left:20px;width:31px;top:429px;text-align:right">50</div>
<div class="abs cl" style="left:535px;top:429px">5</div>
<div class="abs cl" style="left:26px;width:60px;top:485px;text-align:center">0</div>
<div class="abs cl" style="left:73px;width:60px;top:485px;text-align:center">6590</div>
<div class="abs cl" style="left:120px;width:60px;top:485px;text-align:center">13181</div>
<div class="abs cl" style="left:168px;width:60px;top:485px;text-align:center">19771</div>
<div class="abs cl" style="left:215px;width:60px;top:485px;text-align:center">26362</div>
<div class="abs cl" style="left:263px;width:60px;top:485px;text-align:center">32953</div>
<div class="abs cl" style="left:310px;width:60px;top:485px;text-align:center">39543</div>
<div class="abs cl" style="left:357px;width:60px;top:485px;text-align:center">46134</div>
<div class="abs cl" style="left:405px;width:60px;top:485px;text-align:center">52724</div>
<div class="abs cl" style="left:452px;width:60px;top:485px;text-align:center">59315</div>
<div class="abs cl" style="left:508px;top:485px">65906gB</div>
<div class="abs cl" style="left:56px;top:158px">MB/s</div>
<div class="abs cl" style="left:516px;top:158px">ms</div>

<!-- right panel -->
<div class="abs" style="left:579px;top:152px;width:156px;height:21px;box-sizing:border-box;border:1px solid #3c7fb1;border-radius:3px;background:linear-gradient(#f2f6fa 0,#e6eff8 50%,#d0e1f1 50%,#c0d6ec 100%);box-shadow:inset 0 0 0 1px #48d8fb"></div>
<div class="abs t11" style="left:579px;width:156px;top:157px;text-align:center;letter-spacing:-0.15px">Запустить</div>
<div class="abs sep" style="top:183px"></div>
<div class="abs radio" style="left:575px;top:190px"></div>
<div class="abs t11" style="left:591px;top:190px">Чтение</div>
<div class="abs radio" style="left:575px;top:206px"></div>
<div class="abs" style="left:578px;top:209px;width:6px;height:6px;border-radius:50%;background:radial-gradient(circle at 35% 35%,#8fd4f0 0,#1a68a4 45%,#0a3768 100%)"></div>
<div class="abs t11" style="left:591px;top:205px">Запись</div>
<div class="abs sep" style="top:222px"></div>
<div class="abs chk" style="left:575px;top:230px"></div>
<div class="abs t11" style="left:591px;top:231px;letter-spacing:-0.11px">Короткий рабочий ход</div>
<div class="abs" style="left:575px;top:250px;width:62px;height:20px;box-sizing:border-box;border:1px solid #abadb3;background:#fff"></div>
<div class="abs t11" style="left:578px;top:254px;color:#8c8c8c">40</div>
<div class="abs" style="left:620px;top:252px;width:15px;height:16px;box-sizing:border-box;border:1px solid #c0c4c8;background:#f0f0f0"></div>
<div class="abs" style="left:620px;top:259px;width:15px;height:1px;background:#c0c4c8"></div>
<svg class="abs" style="left:625px;top:254px" width="6" height="12"><path d="M0 3.500L2.500 0.500L5 3.500Z M0 8L2.500 11L5 8Z" fill="#a0a4a8"/></svg>
<div class="abs t11" style="left:649px;top:253px">ГБ</div>
<div class="abs chk" style="left:575px;top:279px"></div><svg class="abs" style="left:575px;top:279px" width="13" height="13" viewBox="0 0 13 13"><path d="M3.200 6.300L5.300 9.600L9.800 2.800" stroke="#384c94" stroke-width="1.750" fill="none" stroke-linejoin="miter"/></svg>
<div class="abs t11" style="left:591px;top:280px;letter-spacing:-0.1px">Скорость передачи данных</div>
<div class="abs sep" style="top:294px"></div>
<div class="abs t11" style="left:575px;top:298px">Минимальная скорость</div>
<div class="abs bb" style="top:313px;color:#00bcff">292.4 Мбайт/сек</div>
<div class="abs t11" style="left:575px;top:331px;letter-spacing:0.14px">Максимальная скорость</div>
<div class="abs bb" style="top:345px;color:#00bcff">325.9 Мбайт/сек</div>
<div class="abs t11" style="left:575px;top:361px">Средняя скорость</div>
<div class="abs bb" style="top:376px;color:#00bcff">316.3 Мбайт/сек</div>
<div class="abs sep" style="top:398px"></div>
<div class="abs chk" style="left:575px;top:404px"></div><svg class="abs" style="left:575px;top:404px" width="13" height="13" viewBox="0 0 13 13"><path d="M3.200 6.300L5.300 9.600L9.800 2.800" stroke="#384c94" stroke-width="1.750" fill="none" stroke-linejoin="miter"/></svg>
<div class="abs t11" style="left:591px;top:405px">Время доступа</div>
<div class="abs bb" style="top:420px;color:#ffff00">10.1 мс</div>
<div class="abs chk" style="left:578px;top:438px"></div><svg class="abs" style="left:578px;top:438px" width="13" height="13" viewBox="0 0 13 13"><path d="M3.200 6.300L5.300 9.600L9.800 2.800" stroke="#384c94" stroke-width="1.750" fill="none" stroke-linejoin="miter"/></svg>
<div class="abs t11" style="left:594px;top:439px;letter-spacing:0.12px">Пиковая скорость</div>
<div class="abs bb" style="top:454px;color:#fff">380.5 Мбайт/сек</div>
<div class="abs t11" style="left:575px;top:472px;letter-spacing:0.08px">Загрузка процессора</div>
<div class="abs bb" style="top:487px;color:#fff">1.4%</div>
<!--CHECKS-->
</body></html>
